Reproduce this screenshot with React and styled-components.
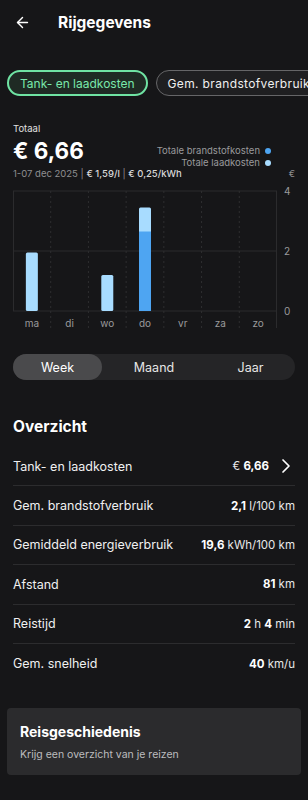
import React from 'react'
import styled, { createGlobalStyle } from 'styled-components'
import { ArrowLeft, ChevronRight } from 'lucide-react'

const GlobalStyle = createGlobalStyle`
  html, body {
    margin: 0;
    padding: 0;
    background: #161618;
  }
  body {
    font-family: Inter, "Noto Sans", sans-serif;
    color: #f2f2f2;
  }
`

const days = ['ma', 'di', 'wo', 'do', 'vr', 'za', 'zo']
// [brandstof, laad] per day, in euro
const data = [[0, 1.95], [0, 0], [0, 1.2], [2.65, 0.8], [0, 0], [0, 0], [0, 0]]

const rows = [
  { label: 'Tank- en laadkosten', parts: [['€ ', false], ['6,66', true]], link: true },
  { label: 'Gem. brandstofverbruik', parts: [['2,1', true], [' l/100 km', false]] },
  { label: 'Gemiddeld energieverbruik', parts: [['19,6', true], [' kWh/100 km', false]] },
  { label: 'Afstand', parts: [['81', true], [' km', false]] },
  { label: 'Reistijd', parts: [['2', true], [' h ', false], ['4', true], [' min', false]] },
  { label: 'Gem. snelheid', parts: [['40', true], [' km/u', false]] },
]

const Chart = () => {
  const w = 264
  const top = 6
  const h = 120
  const col = w / 7
  const y = (v) => top + h - (v / 4) * h
  return (
    <ChartSvg width="282" height="147" viewBox="0 0 282 147">
      {[0, 2, 4].map((v) => (
        <g key={v}>
          <line x1="0" x2={w} y1={y(v)} y2={y(v)} stroke="#2b2b2d" strokeWidth="1" />
          <text x="271" y={y(v) + 4} fill="#9a9a9c" fontSize="10">{v}</text>
        </g>
      ))}
      <line x1="0.5" x2="0.5" y1={top} y2={top + h} stroke="#2b2b2d" />
      <line x1={w - 0.5} x2={w - 0.5} y1={top} y2={top + h + 17} stroke="#2b2b2d" />
      {days.slice(1).map((d, i) => (
        <line key={d} x1={col * (i + 1)} x2={col * (i + 1)} y1={top} y2={top + h + 17}
          stroke="#2e2e30" strokeDasharray="2 3" />
      ))}
      {data.map(([fuel, charge], i) => {
        const cx = col * i + col / 2
        const total = fuel + charge
        if (!total) return null
        return (
          <g key={i}>
            <rect x={cx - 6} y={y(total)} width="12" height={y(0) - y(total)} rx="1.5" fill="#a8dcff" />
            {fuel > 0 && (
              <rect x={cx - 6} y={y(fuel)} width="12" height={y(0) - y(fuel)} fill="#4ea5f2" />
            )}
          </g>
        )
      })}
      {days.map((d, i) => (
        <text key={d} x={col * i + col / 2} y={top + h + 16} textAnchor="middle" fill="#9a9a9c" fontSize="10">{d}</text>
      ))}
    </ChartSvg>
  )
}

const App = () => {
  return (
    <Page>
      <GlobalStyle />
      <Header>
        <ArrowLeft size={17} strokeWidth={2} color="#fff" />
        <Title>Rijgegevens</Title>
      </Header>

      <Chips>
        <Chip active>Tank- en laadkosten</Chip>
        <Chip wide>Gem. brandstofverbruik</Chip>
      </Chips>

      <Summary>
        <Small>Totaal</Small>
        <TotalRow>
          <Total>€ 6,66</Total>
          <Legend>
            <LegendItem>Totale brandstofkosten <Dot color="#4ea5f2" /></LegendItem>
            <LegendItem>Totale laadkosten <Dot color="#a8dcff" /></LegendItem>
          </Legend>
        </TotalRow>
        <MetaRow>
          <Meta>1-07 dec 2025 | <b>€ 1,59/l</b> | <b>€ 0,25/kWh</b></Meta>
          <Meta>€</Meta>
        </MetaRow>
      </Summary>

      <ChartWrap>
        <Chart />
      </ChartWrap>

      <Segmented>
        <Segment active>Week</Segment>
        <Segment>Maand</Segment>
        <Segment>Jaar</Segment>
      </Segmented>

      <Section>
        <SectionTitle>Overzicht</SectionTitle>
        {rows.map((r, i) => (
          <Row key={r.label} last={i === rows.length - 1}>
            <RowLabel>{r.label}</RowLabel>
            <RowValue>
              {r.parts.map(([t, bold], j) => bold ? <b key={j}>{t}</b> : <span key={j}>{t}</span>)}
              {r.link && <ChevronRight size={24} strokeWidth={1.7} color="#fff" style={{ marginLeft: 5, marginRight: -3 }} />}
            </RowValue>
          </Row>
        ))}
      </Section>

      <Card>
        <CardTitle>Reisgeschiedenis</CardTitle>
        <CardText>Krijg een overzicht van je reizen</CardText>
      </Card>
    </Page>
  )
}

const Page = styled.div`
  width: 308px;
  min-height: 800px;
  background: #161618;
  overflow: hidden;
`

const Header = styled.div`
  height: 44px;
  display: flex;
  align-items: center;
  padding: 0 14px;
  gap: 27px;
`

const Title = styled.h1`
  margin: 0;
  font-size: 15.5px;
  font-weight: 700;
  color: #fff;
`

const Chips = styled.div`
  display: flex;
  gap: 8px;
  padding: 26px 0 0 7px;
  white-space: nowrap;
  overflow: hidden;
`

const Chip = styled.div`
  flex: none;
  height: 26px;
  box-sizing: border-box;
  display: flex;
  align-items: center;
  padding: 0 11px;
  border-radius: 13px;
  font-size: 12px;
  letter-spacing: ${(p) => (p.wide ? '0.35px' : 'normal')};
  border: ${(p) => (p.active ? '2px solid #6fe3a3' : '1px solid #666668')};
  background: ${(p) => (p.active ? '#1f2a24' : '#1f1f21')};
  color: ${(p) => (p.active ? '#79e8ab' : '#f0f0f0')};
`

const Summary = styled.div`
  padding: 27px 13px 0;
`

const Small = styled.div`
  font-size: 9.5px;
  color: #e0e0e0;
`

const TotalRow = styled.div`
  display: flex;
  justify-content: space-between;
  align-items: flex-end;
  margin-top: 3px;
`

const Total = styled.div`
  font-size: 22.5px;
  font-weight: 700;
  color: #fff;
  line-height: 28px;
`

const Legend = styled.div`
  display: flex;
  flex-direction: column;
  align-items: flex-end;
  padding-right: 24px;
  gap: 1px;
  margin-bottom: -3px;
`

const LegendItem = styled.div`
  display: flex;
  align-items: center;
  gap: 5px;
  font-size: 9.5px;
  color: #9a9a9c;
  line-height: 11px;
`

const Dot = styled.span`
  width: 6px;
  height: 6px;
  border-radius: 50%;
  background: ${(p) => p.color};
`

const MetaRow = styled.div`
  display: flex;
  justify-content: space-between;
  margin-top: 3px;
`

const Meta = styled.div`
  font-size: 9.5px;
  color: #8e8e90;
  b {
    color: #d8d8d8;
    font-weight: 500;
  }
`

const ChartWrap = styled.div`
  padding: 6px 13px 0;
`

const ChartSvg = styled.svg`
  display: block;
  font-family: Inter, "Noto Sans", sans-serif;
`

const Segmented = styled.div`
  margin: 22px 13px 0;
  height: 26px;
  border-radius: 13px;
  background: #252527;
  display: grid;
  grid-template-columns: 89px 1fr 89px;
`

const Segment = styled.div`
  display: flex;
  align-items: center;
  justify-content: center;
  border-radius: 13px;
  font-size: 12.5px;
  color: ${(p) => (p.active ? '#fff' : '#e6e6e6')};
  background: ${(p) => (p.active ? '#4a4a4c' : 'transparent')};
`

const Section = styled.div`
  padding: 37px 13px 0;
`

const SectionTitle = styled.h2`
  margin: 0 0 11px;
  font-size: 15.5px;
  font-weight: 700;
  color: #fff;
`

const Row = styled.div`
  height: 39.4px;
  display: flex;
  align-items: center;
  justify-content: space-between;
  box-sizing: border-box;
  border-bottom: ${(p) => (p.last ? 'none' : '1px solid #2c2c2e')};
`

const RowLabel = styled.div`
  font-size: 12.5px;
  color: #f0f0f0;
`

const RowValue = styled.div`
  display: flex;
  align-items: center;
  font-size: 11.5px;
  color: #e8e8e8;
  white-space: pre;
  b {
    font-weight: 700;
    color: #fff;
  }
`

const Card = styled.div`
  margin: 25px 7px 0;
  background: #2b2b2d;
  border-radius: 4px;
  padding: 15px 13px 14px;
`

const CardTitle = styled.div`
  font-size: 14px;
  font-weight: 700;
  color: #fff;
`

const CardText = styled.div`
  margin-top: 8px;
  font-size: 10.5px;
  color: #bdbdbf;
`

export default App
